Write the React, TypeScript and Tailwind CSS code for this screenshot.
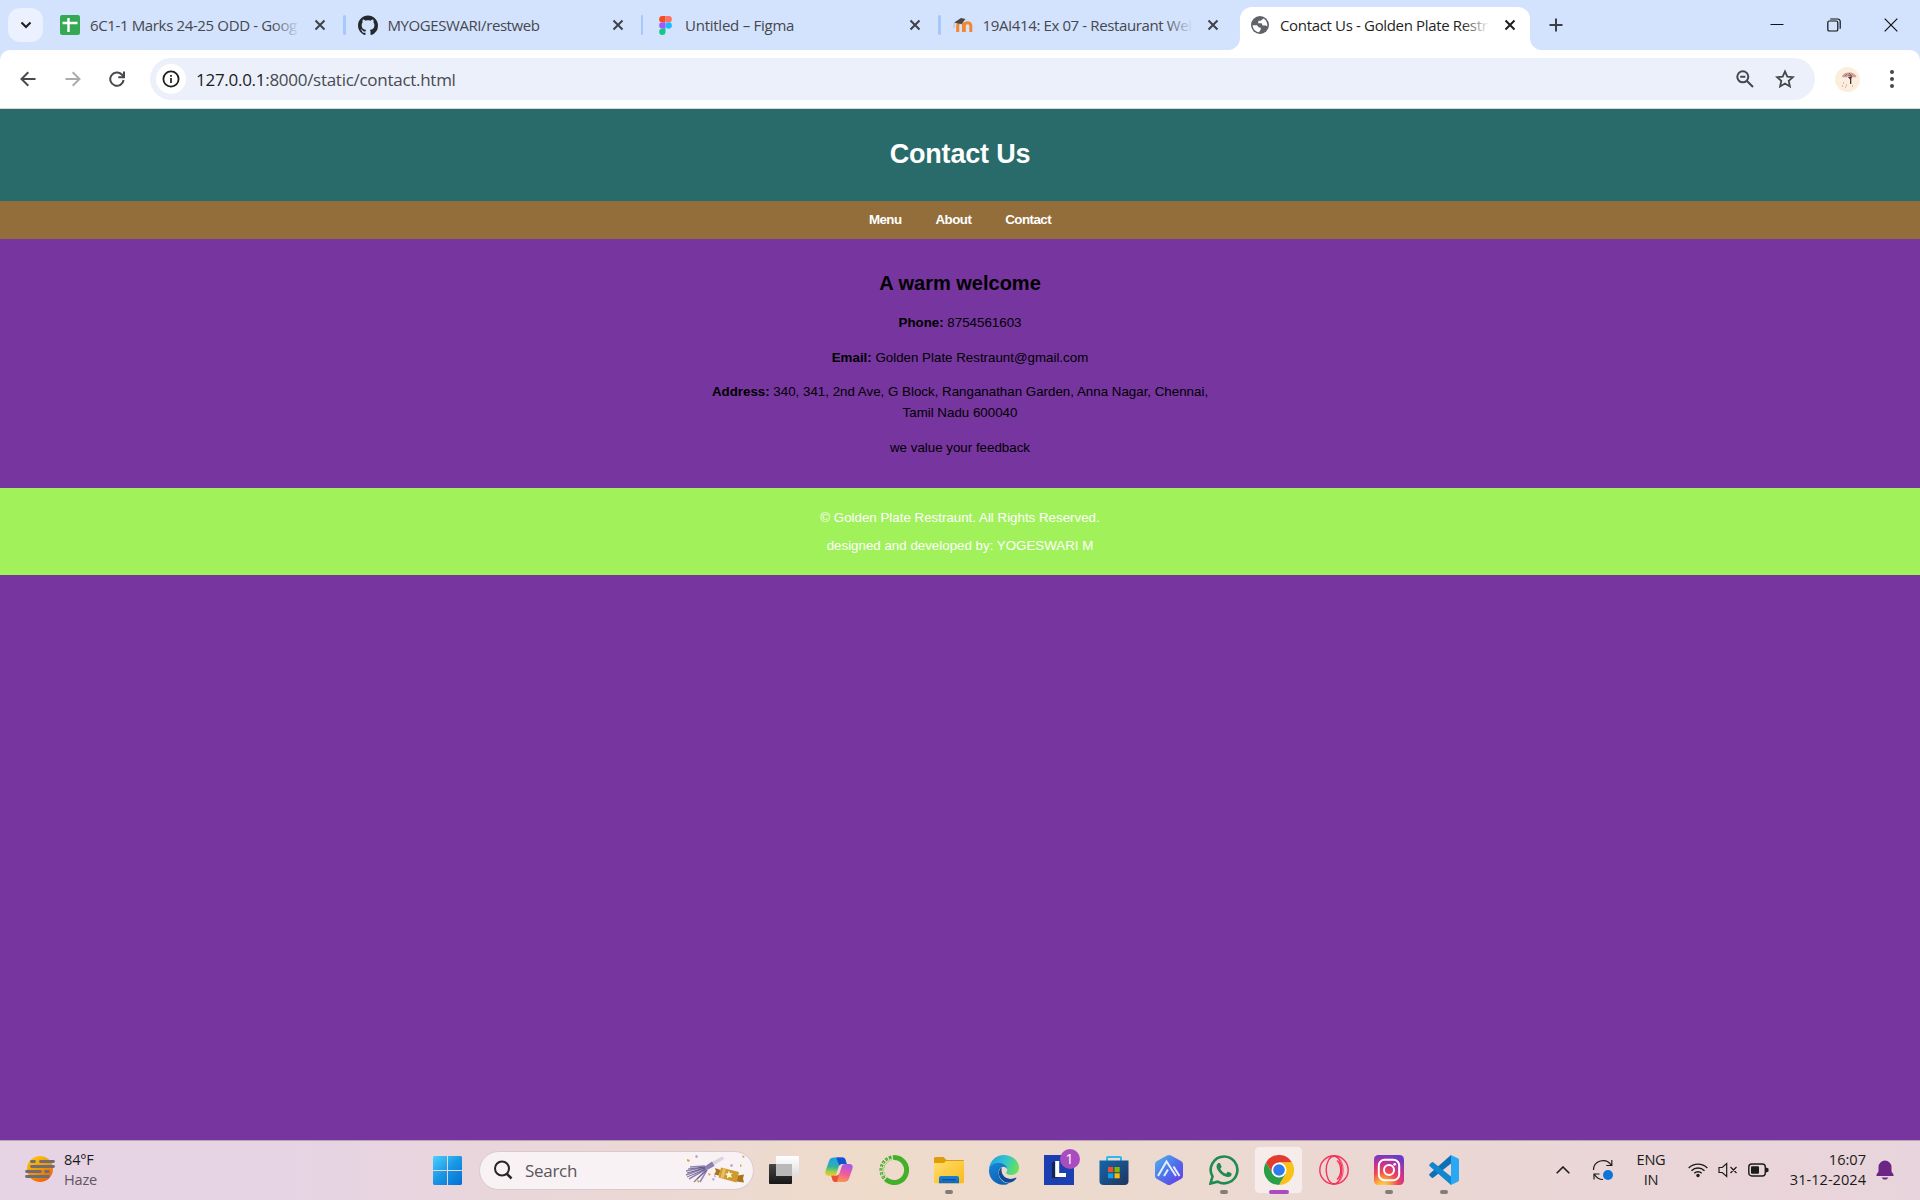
import React from "react";

type TabProps = { icon: React.ReactNode; title: React.ReactNode; fade?: boolean; active?: boolean; divider?: boolean };

function CloseX({ dark }: { dark?: boolean }) {
  return (
    <svg width="20" height="20" viewBox="0 0 20 20" className="shrink-0">
      <path d="M5.500 5.500l9 9M14.500 5.500l-9 9" stroke={dark ? "#1f1f1f" : "#3f4246"} strokeWidth="2" fill="none" />
    </svg>
  );
}

function Tab({ icon, title, fade, active, divider }: TabProps) {
  const body = (
    <>
      <span className="flex h-5 w-5 shrink-0 items-center justify-center">{icon}</span>
      <span className="relative ml-2.5 flex w-[210px] whitespace-nowrap text-[15px] leading-5">
        {title}
        {fade && (
          <span
            className={
              active
                ? "absolute right-0 top-0 h-5 w-7 bg-gradient-to-r from-white/0 to-white"
                : "absolute right-0 top-0 h-5 w-7 bg-gradient-to-r from-[#d3e2fd]/0 to-[#d3e2fd]"
            }
          />
        )}
      </span>
      <span className="ml-2.5 flex">
        <CloseX dark={active} />
      </span>
    </>
  );
  if (active) {
    return (
      <div className="relative mt-[7px] flex h-[43px] w-[290px] items-center rounded-t-xl bg-white pb-[7px] pl-2.5 text-[#1f1f1f]">
        <svg width="12" height="12" viewBox="0 0 12 12" className="absolute -left-3 bottom-0">
          <path d="M12 0v12H0A12 12 0 0 0 12 0z" fill="#fff" />
        </svg>
        <svg width="12" height="12" viewBox="0 0 12 12" className="absolute -right-3 bottom-0">
          <path d="M0 0v12h12A12 12 0 0 1 0 0z" fill="#fff" />
        </svg>
        {body}
      </div>
    );
  }
  return (
    <div className="flex h-[50px] w-[297.5px] items-center text-[#45484d]">
      {body}
      {divider && <span className="ml-[13px] h-5 w-[2.5px] rounded-full bg-[#a8c7fa]" />}
    </div>
  );
}

const GithubMark = () => (
  <svg width="21" height="21" viewBox="0 0 16 16" fill="#24292f">
    <path d="M8 0C3.58 0 0 3.58 0 8c0 3.54 2.29 6.53 5.47 7.59.4.07.55-.17.55-.38 0-.19-.01-.82-.01-1.49-2.01.37-2.53-.49-2.69-.94-.09-.23-.48-.94-.82-1.13-.28-.15-.68-.52-.01-.53.63-.01 1.08.58 1.23.82.72 1.21 1.87.87 2.33.66.07-.52.28-.87.51-1.07-1.78-.2-3.64-.89-3.64-3.95 0-.87.31-1.59.82-2.15-.08-.2-.36-1.02.08-2.12 0 0 .67-.21 2.2.82.64-.18 1.32-.27 2-.27s1.36.09 2 .27c1.53-1.04 2.2-.82 2.2-.82.44 1.1.16 1.92.08 2.12.51.56.82 1.27.82 2.15 0 3.07-1.87 3.75-3.65 3.95.29.25.54.73.54 1.48 0 1.07-.01 1.93-.01 2.2 0 .21.15.46.55.38A8.01 8.01 0 0 0 16 8c0-4.42-3.58-8-8-8z" />
  </svg>
);

const SheetIcon = () => (
  <svg width="20" height="20" viewBox="0 0 20 20">
    <rect width="20" height="20" rx="2.200" fill="#34a853" />
    <path d="M8.500 3v14M2.500 8h15" stroke="#fff" strokeWidth="2.400" />
  </svg>
);

const FigmaIcon = () => (
  <svg width="13" height="19" viewBox="0 0 12 18">
    <path d="M3 0h3v6H3a3 3 0 0 1 0-6z" fill="#f24e1e" />
    <path d="M6 0h3a3 3 0 0 1 0 6H6z" fill="#ff7262" />
    <path d="M3 6h3v6H3a3 3 0 0 1 0-6z" fill="#a259ff" />
    <circle cx="9" cy="9" r="3" fill="#1abcfe" />
    <path d="M3 12h3v3a3 3 0 1 1-3-3z" fill="#0acf83" />
  </svg>
);

const MoodleIcon = () => (
  <svg width="20" height="20" viewBox="0 0 20 20">
    <path d="M4.700 17V10.500a2.900 2.900 0 0 1 5.800 0V17M11.300 17V10.500a3.300 3.300 0 0 1 6.500 0V17" fill="none" stroke="#f3872f" strokeWidth="3" />
    <path d="M1.300 7.500L8 3l4.500 1-4 5L2.500 8z" fill="#474747" />
    <path d="M1.400 7.500L.8 13" stroke="#c9b09a" strokeWidth=".8" />
  </svg>
);

const GlobeIcon = () => (
  <svg width="18" height="18" viewBox="0 0 18 18">
    <circle cx="9" cy="9" r="9" fill="#5f6368" />
    <path
      d="M12.500 2.400L9.800 4.800H7.600L7 7.200h3.600l1 2.400h3.200l1.500.8c.4-3-.8-6.300-3.800-8zM1.600 9.200H6l1.900 2.300h1.800v2.300L8 16.300c-3.600-.5-6.300-3.400-6.400-7.100z"
      fill="#fff"
    />
  </svg>
);

function TabStrip() {
  return (
    <div className="flex h-[50px] bg-[#d3e2fd]">
      <div className="ml-2 mt-2 flex h-[34px] w-[35px] items-center justify-center rounded-xl bg-[#ebf1fe]">
        <svg width="12" height="12" viewBox="0 0 12 12">
          <path d="M1.500 3.500L6 8l4.500-4.500" fill="none" stroke="#1f1f1f" strokeWidth="2.100" />
        </svg>
      </div>
      <div className="ml-[17px] flex">
        <Tab icon={<SheetIcon />} title={<span className="tracking-[-0.36px]">6C1-1 Marks 24-25 ODD - Goog</span>} fade divider />
        <Tab icon={<GithubMark />} title={<span className="tracking-[-0.42px]">MYOGESWARI/restweb</span>} divider />
        <Tab icon={<FigmaIcon />} title={<span className="tracking-[-0.25px]">Untitled – Figma</span>} divider />
        <Tab icon={<MoodleIcon />} title={<span className="tracking-[-0.38px]">19AI414: Ex 07 - Restaurant Wel</span>} fade />
        <div className="-ml-[10px]">
          <Tab icon={<GlobeIcon />} title={<span className="tracking-[-0.34px]">Contact Us - Golden Plate Restr</span>} fade active />
        </div>
      </div>
      <div className="ml-[19px] flex items-center">
        <svg width="14" height="14" viewBox="0 0 14 14">
          <path d="M7 .5v13M.5 7h13" stroke="#3c4043" strokeWidth="2" />
        </svg>
      </div>
      <div className="ml-auto mr-[22px] flex items-center gap-[43px]">
        <svg width="14" height="14" viewBox="0 0 14 14">
          <path d="M.5 6.500h13" stroke="#111" strokeWidth="1" />
        </svg>
        <svg width="14" height="14" viewBox="0 0 14 14" fill="none" stroke="#111" strokeWidth="1.200">
          <rect x=".8" y="3" width="10" height="10" rx="1.600" />
          <path d="M3.200 1h7.300A2.500 2.500 0 0 1 13.200 3.500v7.300" />
        </svg>
        <svg width="14" height="14" viewBox="0 0 14 14">
          <path d="M.7.7l12.600 12.600M13.300.7L.7 13.300" stroke="#111" strokeWidth="1.200" />
        </svg>
      </div>
    </div>
  );
}

function Toolbar() {
  return (
    <div className="bg-[#d3e2fd]">
      <div className="flex h-[58px] items-center rounded-t-[10px] bg-white">
        <svg width="16" height="16" viewBox="0 0 16 16" className="ml-5" fill="none" stroke="#46494d" strokeWidth="2">
          <path d="M15.500 8H1.800M8.300 1.200L1.500 8l6.800 6.800" />
        </svg>
        <svg width="16" height="16" viewBox="0 0 16 16" className="ml-[29px]" fill="none" stroke="#a9abae" strokeWidth="2">
          <path d="M.5 8h13.700M7.700 1.200L14.500 8l-6.800 6.800" />
        </svg>
        <svg width="16" height="16" viewBox="0 0 16 16" className="ml-[28px]" fill="none" stroke="#46494d" strokeWidth="2">
          <path d="M14.600 9a6.700 6.700 0 1 1-1.800-5.500L14.500 5.500" />
          <path d="M15 .5v5.700H9.300" />
        </svg>
        <div className="ml-[25px] flex h-[42px] w-[1665px] items-center rounded-full bg-[#ecf0fa]">
          <span className="ml-1.5 flex h-[30px] w-[30px] items-center justify-center rounded-full bg-white">
            <svg width="18" height="18" viewBox="0 0 18 18">
              <circle cx="9" cy="9" r="7.600" fill="none" stroke="#1f1f1f" strokeWidth="1.800" />
              <path d="M9 8v5M9 5v1.800" stroke="#1f1f1f" strokeWidth="1.700" />
            </svg>
          </span>
          <span className="ml-[10px] whitespace-nowrap pt-0.5 text-[17px] tracking-[-0.28px] text-[#474a50]">
            <span className="text-[#1b1c1e]">127.0.0.1</span>:8000/static/contact.html
          </span>
          <svg width="18" height="18" viewBox="0 0 18 18" className="ml-auto" fill="none" stroke="#44474b" strokeWidth="2">
            <circle cx="6.800" cy="6.800" r="5.500" />
            <path d="M11 11l6 6M4.200 6.800h5.200" />
          </svg>
          <svg width="20" height="20" viewBox="0 0 20 20" className="ml-[21px] mr-5" fill="none" stroke="#44474b" strokeWidth="1.800">
            <path d="M10 2.400l2.300 5.200 5.600.5-4.200 3.800 1.200 5.500-4.900-2.900-4.900 2.900 1.200-5.500L2.100 8.100l5.600-.5z" />
          </svg>
        </div>
        <span className="ml-[20px] flex h-[25px] w-[25px] items-center justify-center rounded-full bg-[#faefdd]">
          <svg width="22" height="22" viewBox="0 0 22 22">
            <path d="M5 9c.5-3 3-4.500 7-4.500s7 2 7.500 4.500c-2 1-4-.5-5 .5-2-1.500-4-1-5 0C8 8.500 6 10 5 9z" fill="#d99a98" />
            <path d="M8 8l2-2M12 5l3 3M11 7l4 1" stroke="#77706a" strokeWidth="1" />
            <path d="M11 9l2 2.500V16h1.300v-5l.7-2.500z" fill="#403634" />
            <path d="M6 15h1M5 18h1M9 17h1M15 18h1M8 19h1" stroke="#e79a9c" strokeWidth="1.300" />
          </svg>
        </span>
        <svg width="6" height="20" viewBox="0 0 6 20" className="ml-[29px]" fill="#44474b">
          <circle cx="3" cy="3" r="2" />
          <circle cx="3" cy="10" r="2" />
          <circle cx="3" cy="17" r="2" />
        </svg>
      </div>
      <div className="h-px bg-[#d5dad9]" />
    </div>
  );
}

function ContactPage() {
  return (
    <main className="flex h-[1031px] flex-col bg-[#76359f] text-center font-['Liberation_Sans',sans-serif] text-[13.33px] leading-[21px] text-black">
      <header className="flex h-[92px] items-center justify-center bg-[#296b6a] pb-[2px] text-white">
        <h1 className="text-[27px] font-bold leading-[42px] tracking-[-0.2px]">Contact Us</h1>
      </header>
      <nav className="flex h-[38px] items-center justify-center gap-[34px] bg-[#936e3a] pb-0.5 font-bold tracking-[-0.55px] text-white">
        <a>Menu</a>
        <a>About</a>
        <a>Contact</a>
      </nav>
      <section className="mx-auto flex h-[249px] w-[502px] flex-col pt-[28px]">
        <h2 className="text-[20px] font-bold leading-8">A warm welcome</h2>
        <p className="mt-[13px]"><b>Phone:</b> 8754561603</p>
        <p className="mt-[14px]"><b>Email:</b> Golden Plate Restraunt@gmail.com</p>
        <p className="mt-[13px]">
          <b>Address:</b> 340, 341, 2nd Ave, G Block, Ranganathan Garden, Anna Nagar, Chennai,
          <br />
          Tamil Nadu 600040
        </p>
        <p className="mt-[14px]">we value your feedback</p>
      </section>
      <footer className="h-[87px] bg-[#a1f15b] pt-[19px] text-white">
        <p>© Golden Plate Restraunt. All Rights Reserved.</p>
        <p className="mt-[7px]">designed and developed by: YOGESWARI M</p>
      </footer>
    </main>
  );
}

const TaskView = () => (
  <svg width="30" height="30" viewBox="0 0 30 30">
    <defs>
      <linearGradient id="tv1" x1="0" y1="0" x2="0" y2="1"><stop stopColor="#464646" /><stop offset="1" stopColor="#171717" /></linearGradient>
      <linearGradient id="tv2" x1="0" y1="0" x2="0" y2="1"><stop stopColor="#fff" /><stop offset="1" stopColor="#dedede" /></linearGradient>
    </defs>
    <rect x="0" y="9" width="23" height="20" rx="1" fill="url(#tv1)" />
    <rect x="7" y="1" width="23" height="20" rx="1" fill="url(#tv2)" />
    <path d="M7 9h16v12H8a1 1 0 0 1-1-1z" fill="#b9b9b9" />
  </svg>
);

const Copilot = () => (
  <svg width="30" height="30" viewBox="0 0 30 30">
    <defs>
      <linearGradient id="cp1" x1=".3" y1="0" x2=".2" y2="1"><stop stopColor="#1a9ff0" /><stop offset=".5" stopColor="#33b1a0" /><stop offset=".8" stopColor="#a8d33e" /><stop offset="1" stopColor="#f8c520" /></linearGradient>
      <linearGradient id="cp2" x1=".7" y1="0" x2=".4" y2="1"><stop stopColor="#a15be8" /><stop offset=".5" stopColor="#ee5aa0" /><stop offset="1" stopColor="#fa9a48" /></linearGradient>
    </defs>
    <path d="M10 2.500h8.500c2 0 2.600 1 3.200 3l1 3.500h-4.500c-2 0-3 1-3.700 3l-2 6.500c-.6 1.700-1.700 2.300-3.500 2.300H4.500C1.800 20.800.7 18.500 1.500 16L5 6c1-2.600 2.500-3.500 5-3.500z" fill="url(#cp1)" />
    <path d="M12 2.500h6.500c2 0 2.600 1 3.200 3l1 3.500h-4.500c-1.300 0-2.200.5-2.900 1.500L13 4.500c-.5-1.200-.5-1.700-1-2z" fill="#174fd1" />
    <path d="M20 27h-8.500c-2 0-2.800-1-3.300-3l-.9-3.200H12c2 0 3-1 3.700-3l2-6.300c.6-1.800 1.700-2.500 3.500-2.500H25c3 0 4.300 2 3.500 4.500L25 23.500c-1 2.600-2.500 3.500-5 3.500z" fill="url(#cp2)" />
    <path d="M7.300 20.800H12c1.500 0 2.500-.6 3.200-2L13 26.900h-1.500c-2 0-2.800-1-3.300-3z" fill="#e9513b" />
  </svg>
);

const GreenRing = () => (
  <svg width="30" height="30" viewBox="0 0 30 30" fill="none" stroke="#43b02a">
    <path d="M15 2.500a12.500 12.500 0 1 1-7 22.800" strokeWidth="5" />
    <path d="M8.500 25.500A12.500 12.500 0 0 1 15 2.500" strokeWidth="4.600" strokeDasharray="2.500 1.300" />
    <path d="M7 22A10.500 10.500 0 0 1 12.500 4.500" stroke="#eedbcb" strokeWidth="1.300" strokeDasharray="2 1.400" />
    <path d="M4.500 23A13 13 0 0 1 10 3.200" stroke="#eedbcb" strokeWidth="1" strokeDasharray="1.400 2.400" />
  </svg>
);

const Folder = () => (
  <svg width="30" height="30" viewBox="0 0 30 30">
    <defs>
      <linearGradient id="fd" x1="0" y1="0" x2="1" y2="1"><stop stopColor="#ffdd6e" /><stop offset="1" stopColor="#fbb91a" /></linearGradient>
      <linearGradient id="fb" x1="0" y1="0" x2="0" y2="1"><stop stopColor="#1583d8" /><stop offset="1" stopColor="#1566b5" /></linearGradient>
    </defs>
    <path d="M0 3.500A1.500 1.500 0 0 1 1.500 2H9.500l3 3H29a1 1 0 0 1 1 1v5H0z" fill="#dd9d0b" />
    <path d="M0 8h9.500c1 0 2-2 3-2H30v21a1.300 1.300 0 0 1-1.300 1.300H1.300A1.300 1.300 0 0 1 0 27z" fill="url(#fd)" />
    <path d="M5 28.300V23a2 2 0 0 1 2-2h16a2 2 0 0 1 2 2v5.300z" fill="url(#fb)" />
    <path d="M8.500 24.700h13" stroke="#0e4f91" strokeWidth="1.200" />
  </svg>
);

const Edge = () => (
  <svg width="30" height="30" viewBox="0 0 30 30">
    <defs>
      <linearGradient id="eg1" x1="0" y1=".3" x2="1" y2=".6"><stop stopColor="#249fe0" /><stop offset=".5" stopColor="#32c4cf" /><stop offset="1" stopColor="#6be34f" /></linearGradient>
      <linearGradient id="eg2" x1="0" y1="0" x2=".5" y2="1"><stop stopColor="#1686d8" /><stop offset="1" stopColor="#0c62b8" /></linearGradient>
    </defs>
    <path d="M0 14C.8 6 7 0 15 0c9 0 15 6.500 15 12.500 0 4.500-3.500 7.500-7.800 7.500-3.500 0-5-1.300-5-2.200 0-.7 1-1.200 1-3.200 0-3-3-5.200-6.500-5.200C6 9.400 2 11 0 14z" fill="url(#eg1)" />
    <path d="M0 15C1 9.500 5.500 8 9.800 8c4.200 0 8 2.300 8.400 6.200-.8-1.600-2-2.500-3.700-2.500-3.200 0-5.200 3.300-4.800 7.300.5 5.500 5.300 9.500 10.300 9.200-2 1.200-4 1.800-6.200 1.500C5.500 29.600-.5 22.500 0 15z" fill="url(#eg2)" />
    <path d="M12.700 12.200C9 14.500 9 21 12.500 24.500c4 4 10 5 14.800-1 .4-.6 0-1-.6-.7-5.200 2.200-10.500 1-13-3.300-1.400-2.500-1.300-5.200-1-7.300z" fill="#104a93" />
  </svg>
);

const LApp = () => (
  <span className="relative flex">
    <svg width="30" height="30" viewBox="0 0 30 30">
      <rect width="30" height="30" fill="#1b3fb0" />
      <path d="M8 23V8l3-2v12l3 1v4z" fill="#12264b" />
      <path d="M13.200 6v14H22" fill="none" stroke="#fff" strokeWidth="4" />
    </svg>
    <span className="absolute -right-[6px] -top-[6px] flex h-5 w-5 items-center justify-center rounded-full bg-[#a94cc0] text-[14px] leading-5 text-white">1</span>
  </span>
);

const Store = () => (
  <svg width="30" height="30" viewBox="0 0 30 30">
    <defs><linearGradient id="st" x1="0" y1="0" x2="1" y2="1"><stop stopColor="#1466ad" /><stop offset="1" stopColor="#20345f" /></linearGradient></defs>
    <path d="M8 7V3a1 1 0 0 1 1-1h12a1 1 0 0 1 1 1v4" fill="none" stroke="#2cb9ee" strokeWidth="2" />
    <path d="M.5 5.500h29V26a4 4 0 0 1-4 4h-21a4 4 0 0 1-4-4z" fill="url(#st)" />
    <path d="M9 12h5.200v5.200H9z" fill="#f25022" /><path d="M15.500 12h5.200v5.200h-5.200z" fill="#7fba00" />
    <path d="M9 18.300h5.200v5H9z" fill="#00a4ef" /><path d="M15.500 18.300h5.200v5h-5.200z" fill="#ffb900" />
  </svg>
);

const AiHex = () => (
  <svg width="30" height="30" viewBox="0 0 30 30">
    <defs><linearGradient id="ai" x1="0" y1="0" x2="1" y2="1"><stop stopColor="#54b5ed" /><stop offset=".5" stopColor="#4d72ea" /><stop offset="1" stopColor="#6a35e8" /></linearGradient></defs>
    <path d="M13 .5q2-1 4 0L27 6q2 1 2 3v12q0 2-2 3l-10 5.500q-2 1-4 0L3 24q-2-1-2-3V9q0-2 2-3z" fill="url(#ai)" />
    <path d="M4 21l8.500-14.500L22 21M10 21l4-6.500M19.500 11.500L25.500 21" fill="none" stroke="#e6edff" strokeWidth="2" />
  </svg>
);

const WhatsApp = () => (
  <svg width="30" height="30" viewBox="0 0 24 24" fill="#1f8a52">
    <path d="M17.472 14.382c-.297-.149-1.758-.867-2.030-.967-.273-.099-.471-.148-.670.150-.197.297-.767.966-.940 1.164-.173.199-.347.223-.644.075-.297-.150-1.255-.463-2.390-1.475-.883-.788-1.480-1.761-1.653-2.059-.173-.297-.018-.458.130-.606.134-.133.298-.347.446-.520.149-.174.198-.298.298-.497.099-.198.050-.371-.025-.520-.075-.149-.669-1.612-.916-2.207-.242-.579-.487-.5-.669-.510-.173-.008-.371-.010-.570-.010-.198 0-.520.074-.792.372-.272.297-1.040 1.016-1.040 2.479 0 1.462 1.065 2.875 1.213 3.074.149.198 2.096 3.200 5.077 4.487.709.306 1.262.489 1.694.625.712.227 1.360.195 1.871.118.571-.085 1.758-.719 2.006-1.413.248-.694.248-1.289.173-1.413-.074-.124-.272-.198-.570-.347z" />
    <path d="M12.100 1.200A10.700 10.700 0 0 0 2.800 17.200L1.200 22.800l5.700-1.500A10.700 10.700 0 1 0 12.100 1.200z" fill="none" stroke="#1f8a52" strokeWidth="2.100" />
  </svg>
);

const Chrome = () => (
  <svg width="30" height="30" viewBox="0 0 30 30">
    <path d="M2 7.500A15 15 0 0 1 28 7.500H15L8.500 18.700z" fill="#e33b2e" />
    <path d="M28 7.500A15 15 0 0 1 15 30l6.500-11.300L15 7.500z" fill="#fbc116" />
    <path d="M15 30A15 15 0 0 1 2 7.500l6.500 11.200h13z" fill="#2b9f48" />
    <circle cx="15" cy="15" r="7.500" fill="#fff" />
    <circle cx="15" cy="15" r="5.800" fill="#2f7bed" />
  </svg>
);

const OperaGx = () => (
  <svg width="30" height="30" viewBox="0 0 30 30" fill="none" stroke="#f6315c">
    <circle cx="15" cy="15" r="14.200" strokeWidth="1.400" />
    <ellipse cx="15" cy="15" rx="7.800" ry="13.800" strokeWidth="1.400" />
    <path d="M18 5.500c5 4.500 5 14.500 0 19" strokeWidth="1.500" />
    <path d="M17 1.300C26.500 5 26.500 25 17 28.700" strokeWidth=".9" />
  </svg>
);

const Instagram = () => (
  <svg width="30" height="30" viewBox="0 0 30 30">
    <defs>
      <radialGradient id="ig" cx=".3" cy="1.050" r="1.100"><stop stopColor="#fed866" /><stop offset=".2" stopColor="#fdac3c" /><stop offset=".45" stopColor="#f2484f" /><stop offset=".68" stopColor="#c8338e" /><stop offset="1" stopColor="#6a3bc9" /></radialGradient>
    </defs>
    <rect width="30" height="30" rx="4.500" fill="url(#ig)" />
    <g fill="none" stroke="#fff" strokeWidth="2">
      <rect x="4.800" y="4.800" width="20.400" height="20.400" rx="5.800" />
      <circle cx="15" cy="15" r="5" />
    </g>
    <circle cx="20.700" cy="9.300" r="1.400" fill="#fff" />
  </svg>
);

const VsCode = () => (
  <svg width="30" height="30" viewBox="0 0 30 30">
    <path d="M22 0v8.500L4.500 22.600q-1 .8-2-.1L.7 20.700q-1-1 0-2z" fill="#0a70b8" />
    <path d="M22 30v-8.500L4.500 7.400q-1-.8-2 .1L.7 9.300q-1 1 0 2z" fill="#1187cf" />
    <path d="M22 0l6.800 3.200q1.200.6 1.200 2v19.600q0 1.400-1.200 2L22 30z" fill="#2ba7f3" />
  </svg>
);

type TaskbarApp = { icon: React.ReactNode; state?: "open" | "focused" };
const apps: TaskbarApp[] = [
  { icon: <TaskView /> },
  { icon: <Copilot /> },
  { icon: <GreenRing /> },
  { icon: <Folder />, state: "open" },
  { icon: <Edge /> },
  { icon: <LApp /> },
  { icon: <Store /> },
  { icon: <AiHex /> },
  { icon: <WhatsApp />, state: "open" },
  { icon: <Chrome />, state: "focused" },
  { icon: <OperaGx /> },
  { icon: <Instagram />, state: "open" },
  { icon: <VsCode />, state: "open" },
];

const WeatherIcon = () => (
  <svg width="30" height="26" viewBox="0 0 30 26" className="-mt-0.5">
    <defs><linearGradient id="sun" x1=".2" y1="0" x2=".8" y2="1"><stop stopColor="#fbc80e" /><stop offset="1" stopColor="#e9600d" /></linearGradient></defs>
    <circle cx="15" cy="13" r="13" fill="url(#sun)" />
    <g stroke="#6f6d70" strokeWidth="2.800" strokeLinecap="round">
      <path d="M6.500 5.500h3M15.500 5.500h13M6.500 10.500h22M1.500 15.500h14M20.500 15.500h3M1.500 20.500h22" />
    </g>
  </svg>
);

const WindowsLogo = () => (
  <svg width="29" height="29" viewBox="0 0 29 29">
    <defs><linearGradient id="win" gradientUnits="userSpaceOnUse" x1="0" y1="0" x2="26" y2="29"><stop stopColor="#4fd0ff" /><stop offset=".5" stopColor="#1a98e6" /><stop offset="1" stopColor="#0673d3" /></linearGradient></defs>
    <path d="M1 0h13v14H0V1zM15 0h13l1 1v13H15zM0 15h14v14H1l-1-1zM15 15h14v13l-1 1H15z" fill="url(#win)" />
  </svg>
);

const PartyArt = () => (
  <svg width="61" height="32" viewBox="0 0 61 32">
    <path d="M25 9L36 3q3-1 3 2L28 12z" fill="#ddd3de" />
    <path d="M19 13l8-5.500 2.500 4.500-7.500 4z" fill="#8b80b0" />
    <path d="M20 12L5 13M20 13L1 17M20 14L1 21M21 15L4 25M21 16L9 28M22 16L15 28" stroke="#9184b2" strokeWidth="1.500" fill="none" />
    <path d="M20 13L3 15M20 14L2 19M21 15L2 23M22 16L12 25" stroke="#554a7c" strokeWidth=".8" fill="none" />
    <path d="M36 13.500l18 4.500-2.500 10.500-18-5z" fill="#cf9a2c" />
    <path d="M38 14l3 .8-2.600 10-3-.9z" fill="#e6bf62" />
    <path d="M30 14l5.500 2-1.800 5.500-4.700-1 2-3zM53 21.500l6-1-1 4 1 4-7.300-1z" fill="#aa7418" />
    <path d="M44 16.500l.9 2.700 2.900-.3-1.900 2.200 1.100 2.700-2.700-1-2.300 1.700.2-3-2.300-1.600 2.900-.7z" fill="#fff4dc" />
    <path d="M2 5l3 1-1 2-2-1zM57 1l3 2-2 1zM12 26l3 1-2 2zM23 19l3 1-2 2zM55 10l2 2-2 1z" fill="#d9a238" />
    <path d="M11 1l2 1-1 2-2-1zM46 10l2 1-1 2-2-1zM27 24l3 1-2 2zM29 21l2 1-1 2z" fill="#b29bcb" />
  </svg>
);

function Taskbar() {
  return (
    <div className="flex h-[60px] items-center border-t border-[#b9a3b6] bg-gradient-to-r from-[#e6d3e4] from-15% via-[#eedbca] via-45% to-[#e8d4dc] pb-px text-[#1b1b1b]">
      <div className="flex w-[433px] items-center pl-[25px]">
        <WeatherIcon />
        <div className="-mt-[3px] ml-[9px] text-[14.600px] leading-5 tracking-[-0.2px]">
          <div>84°F</div>
          <div className="text-[#5f5862]">Haze</div>
        </div>
      </div>
      <WindowsLogo />
      <div className="ml-[17px] flex h-[39px] w-[275px] items-center rounded-full border border-[#dac8cf] bg-[#f8f2f4] pl-[13px] pr-[7px]">
        <svg width="20" height="20" viewBox="0 0 20 20" fill="none" stroke="#26262a">
          <circle cx="9" cy="8.500" r="7" strokeWidth="2" />
          <path d="M13.500 13.500l5 5" strokeWidth="2.600" />
        </svg>
        <span className="ml-3 pt-px text-[17px] tracking-[-0.3px] text-[#5a5659]">Search</span>
        <span className="ml-auto"><PartyArt /></span>
      </div>
      <div className="ml-[2px] flex">
        {apps.map((app, i) => (
          <div
            key={i}
            className={
              app.state === "focused"
                ? "relative mx-[3px] flex h-12 w-[49px] items-center justify-center rounded-[5px] border border-[#eadbd8] bg-[#f6ece9]"
                : "relative flex h-12 w-[55px] items-center justify-center"
            }
          >
            {app.icon}
            {app.state && (
              <span className={app.state === "focused" ? "absolute -bottom-px h-1 w-5 rounded-full bg-[#a94cc0]" : "absolute bottom-0 h-1 w-2 rounded-full bg-[#857b77]"} />
            )}
          </div>
        ))}
      </div>
      <div className="ml-auto flex items-center">
        <svg width="14" height="8" viewBox="0 0 14 8" fill="none" stroke="#1b1b1b" strokeWidth="1.600">
          <path d="M.7 7.200L7 1l6.300 6.200" />
        </svg>
        <svg width="22" height="22" viewBox="0 0 22 22" className="ml-[22px]" fill="none" stroke="#1b1b1b" strokeWidth="1.200">
          <path d="M1.500 11C1.500 1.500 14-2 19.300 6.300M19.800 1v5.500h-5.500M2 20.500V15h5.500M2.500 15.500c2 3.500 5 5 8.500 5" />
          <circle cx="16" cy="16" r="5" fill="#0b76d8" stroke="none" />
        </svg>
        <div className="-mt-0.5 ml-[21px] w-[32px] text-center text-[14.600px] leading-5 tracking-[-0.3px]">
          <div>ENG</div>
          <div>IN</div>
        </div>
        <svg width="20" height="16" viewBox="0 0 20 16" className="ml-[21px]" fill="none" stroke="#1b1b1b" strokeWidth="1.400">
          <path d="M.7 6a13 13 0 0 1 18.600 0M3.500 8.700a9.200 9.200 0 0 1 13 0M6.300 11.300a5.200 5.200 0 0 1 7.400 0" />
          <circle cx="10" cy="13.500" r="1.700" fill="#1b1b1b" stroke="none" />
        </svg>
        <svg width="20" height="16" viewBox="0 0 20 16" className="ml-[10px]" fill="none" stroke="#1b1b1b" strokeWidth="1.200">
          <path d="M1 5.500h3.200L8.700 1.500v13l-4.500-4H1zM12.500 5l6 6M18.500 5l-6 6" />
        </svg>
        <svg width="21" height="14" viewBox="0 0 21 14" className="ml-[10px]">
          <rect x=".8" y="1" width="16.500" height="12" rx="3" fill="none" stroke="#1b1b1b" strokeWidth="1.400" />
          <rect x="3" y="3.200" width="8" height="7.600" rx="1" fill="#1b1b1b" />
          <path d="M18 4.500l2.500 1v3l-2.500 1z" fill="#1b1b1b" />
        </svg>
        <div className="-mt-[3px] ml-[18px] w-[79px] whitespace-nowrap text-right text-[14.600px] leading-5">
          <div>16:07</div>
          <div>31-12-2024</div>
        </div>
        <svg width="18" height="20" viewBox="0 0 18 20" className="ml-[10px] mr-[26px]" fill="#6d2585">
          <path d="M9 .5a6.500 6.500 0 0 1 6.500 6.500v4.500l2 3v1.500H.5v-1.500l2-3V7A6.500 6.500 0 0 1 9 .5zM5.500 17.500h7L10.500 19.500h-3z" />
        </svg>
      </div>
    </div>
  );
}

export default function App() {
  return (
    <div className="h-[1200px] w-[1920px] overflow-hidden font-['Open_Sans','Noto_Sans',sans-serif]">
      <TabStrip />
      <Toolbar />
      <ContactPage />
      <Taskbar />
    </div>
  );
}
